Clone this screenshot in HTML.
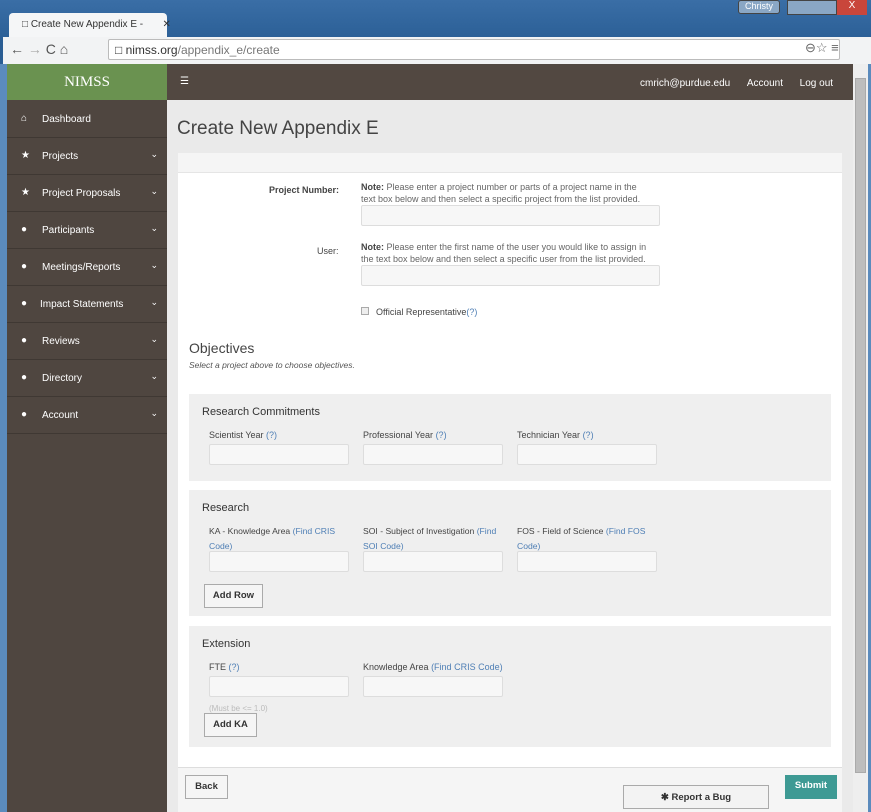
<!DOCTYPE html>
<html><head><style>
*{box-sizing:border-box;margin:0;padding:0}
body{width:871px;height:812px;overflow:hidden;position:relative;font-family:"Liberation Sans",sans-serif;background:#2a5d93}
.a{position:absolute}
.t{font-size:9px;color:#444}
.in{position:absolute;background:#f7f7f7;border:1px solid #ddd;border-radius:2px;height:21px}
.lnk{color:#4f7fb5}
.btn{position:absolute;background:#f5f5f5;border:1px solid #aaa;font-size:9.5px;font-weight:bold;color:#333;text-align:center}
.nav{position:absolute;left:7px;width:160px;height:37px;border-bottom:1px solid #3f3833;color:#fff;font-size:10px}
.nav span{position:absolute;left:35px;top:13px}
.nav i{position:absolute;left:14px;top:12px;font-style:normal;font-size:10px}
.nav b{position:absolute;right:9px;top:11px;font-weight:normal;font-size:9px}
.sec{position:absolute;left:189px;width:642px;background:#efefef}
.h{position:absolute;left:13px;font-size:11px;color:#333}
</style></head><body>
<div class="a" style="left:0;top:0;width:871px;height:40px;background:linear-gradient(#3a6ea6,#2b5f96)"></div>
<div class="a" style="left:9px;top:13px;width:158px;height:25px;background:#f5f6f7;border-radius:4px 4px 0 0"></div>
<div class="a" style="left:22px;top:19px;font-size:10px;color:#333">&#9633; Create New Appendix E - &nbsp;&nbsp;&nbsp;&nbsp;&nbsp;&nbsp;✕</div>
<div class="a" style="left:738px;top:0;width:42px;height:14px;background:#8aa7c5;border:1px solid #444;border-radius:3px;font-size:9px;color:#fff;text-align:center">Christy</div>
<div class="a" style="left:787px;top:0;width:50px;height:15px;background:#8aa7c5;border:1px solid #444"></div>
<div class="a" style="left:837px;top:0;width:30px;height:15px;background:#c9463b;color:#fff;font-size:10px;text-align:center">X</div>
<div class="a" style="left:3px;top:37px;width:868px;height:27px;background:#f2f3f4"></div>
<div class="a" style="left:10px;top:41px;font-size:14px;color:#555">← <span style="color:#aaa">→</span> C ⌂</div>
<div class="a" style="left:108px;top:39px;width:732px;height:21px;background:#fff;border:1px solid #bbb;border-radius:2px;font-size:12px;color:#333;padding:3px 6px">&#9633; nimss.org<span style="color:#777">/appendix_e/create</span></div>
<div class="a" style="left:805px;top:40px;font-size:13px;color:#666">⊖☆ ≡</div>
<div class="a" style="left:0;top:64px;width:7px;height:748px;background:#5b8bbd"></div>
<div class="a" style="left:7px;top:64px;width:160px;height:36px;background:#6a9250;color:#fff;font-family:'Liberation Serif',serif;font-size:15px;text-align:center;padding-top:10px">NIMSS</div>
<div class="a" style="left:167px;top:64px;width:686px;height:36px;background:#524841"></div>
<div class="a" style="left:180px;top:76px;color:#fff;font-size:10px">☰</div>
<div class="a" style="left:640px;top:78px;color:#fff;font-size:10px">cmrich@purdue.edu &nbsp;&nbsp;&nbsp;&nbsp;&nbsp;Account &nbsp;&nbsp;&nbsp;&nbsp;&nbsp;Log out</div>
<div class="a" style="left:7px;top:100px;width:160px;height:712px;background:#4f4640"></div>
<div class="nav" style="top:101px"><i>⌂</i><span style="top:13px">Dashboard</span></div>
<div class="nav" style="top:138px"><i>★</i><span>Projects</span><b>⌄</b></div>
<div class="nav" style="top:175px"><i>★</i><span>Project Proposals</span><b>⌄</b></div>
<div class="nav" style="top:212px"><i>●</i><span>Participants</span><b>⌄</b></div>
<div class="nav" style="top:249px"><i>●</i><span>Meetings/Reports</span><b>⌄</b></div>
<div class="nav" style="top:286px"><i>●</i><span style="left:33px">Impact Statements</span><b>⌄</b></div>
<div class="nav" style="top:323px"><i>●</i><span>Reviews</span><b>⌄</b></div>
<div class="nav" style="top:360px"><i>●</i><span>Directory</span><b>⌄</b></div>
<div class="nav" style="top:397px"><i>●</i><span>Account</span><b>⌄</b></div>
<div class="a" style="left:167px;top:100px;width:686px;height:712px;background:#eaeaea"></div>
<div class="a" style="left:853px;top:64px;width:15px;height:748px;background:#eee"></div>
<div class="a" style="left:855px;top:78px;width:11px;height:695px;background:#bdbdbd;border:1px solid #aaa"></div>
<div class="a" style="left:868px;top:64px;width:3px;height:748px;background:#5b8bbd"></div>
<div class="a" style="left:177px;top:118px;font-size:19px;color:#444">Create New Appendix E</div>
<div class="a" style="left:178px;top:153px;width:664px;height:617px;background:#fff"></div>
<div class="a" style="left:178px;top:153px;width:664px;height:20px;background:#f5f5f5;border-bottom:1px solid #e5e5e5"></div>
<div class="a t" style="left:269px;top:185px;font-weight:bold;font-size:9px">Project Number:</div>
<div class="a t" style="left:361px;top:181px;line-height:12px;font-size:9px;color:#666"><b style="color:#444">Note:</b> Please enter a project number or parts of a project name in the<br>text box below and then select a specific project from the list provided.</div>
<div class="in" style="left:361px;top:205px;width:299px"></div>
<div class="a t" style="left:317px;top:246px;font-size:9px">User:</div>
<div class="a t" style="left:361px;top:241px;line-height:12px;font-size:9px;color:#666"><b style="color:#444">Note:</b> Please enter the first name of the user you would like to assign in<br>the text box below and then select a specific user from the list provided.</div>
<div class="in" style="left:361px;top:265px;width:299px"></div>
<div class="a" style="left:361px;top:307px;width:8px;height:8px;border:1px solid #aaa;background:#eee"></div>
<div class="a t" style="left:376px;top:307px;font-size:9px">Official Representative<span class="lnk">(?)</span></div>
<div class="a" style="left:189px;top:340px;font-size:14px;color:#444">Objectives</div>
<div class="a" style="left:189px;top:360px;font-size:8.5px;color:#555;font-style:italic">Select a project above to choose objectives.</div>
<div class="sec" style="top:394px;height:87px">
<div class="h" style="top:12px">Research Commitments</div>
<div class="a t" style="left:20px;top:36px">Scientist Year <span class="lnk">(?)</span></div>
<div class="a t" style="left:174px;top:36px">Professional Year <span class="lnk">(?)</span></div>
<div class="a t" style="left:328px;top:36px">Technician Year <span class="lnk">(?)</span></div>
<div class="in" style="left:20px;top:50px;width:140px"></div>
<div class="in" style="left:174px;top:50px;width:140px"></div>
<div class="in" style="left:328px;top:50px;width:140px"></div>
</div>
<div class="sec" style="top:490px;height:126px">
<div class="h" style="top:12px">Research</div>
<div class="a t" style="left:20px;top:34px;line-height:15px;width:140px;font-size:8.6px">KA - Knowledge Area <span class="lnk">(Find CRIS Code)</span></div>
<div class="a t" style="left:174px;top:34px;line-height:15px;width:140px;font-size:8.6px">SOI - Subject of Investigation <span class="lnk">(Find SOI Code)</span></div>
<div class="a t" style="left:328px;top:34px;line-height:15px;width:140px;font-size:8.6px">FOS - Field of Science <span class="lnk">(Find FOS Code)</span></div>
<div class="in" style="left:20px;top:61px;width:140px"></div>
<div class="in" style="left:174px;top:61px;width:140px"></div>
<div class="in" style="left:328px;top:61px;width:140px"></div>
<div class="btn" style="left:15px;top:94px;width:59px;height:24px;line-height:22px">Add Row</div>
</div>
<div class="sec" style="top:626px;height:121px">
<div class="h" style="top:12px">Extension</div>
<div class="a t" style="left:20px;top:36px">FTE <span class="lnk">(?)</span></div>
<div class="a t" style="left:174px;top:36px">Knowledge Area <span class="lnk">(Find CRIS Code)</span></div>
<div class="in" style="left:20px;top:50px;width:140px"></div>
<div class="in" style="left:174px;top:50px;width:140px"></div>
<div class="a" style="left:20px;top:78px;font-size:8px;color:#bbb">(Must be &lt;= 1.0)</div>
<div class="btn" style="left:15px;top:87px;width:53px;height:24px;line-height:22px">Add KA</div>
</div>
<div class="a" style="left:178px;top:767px;width:664px;height:45px;background:#f5f5f5;border-top:1px solid #ddd"></div>
<div class="btn" style="left:185px;top:775px;width:43px;height:24px;line-height:22px">Back</div>
<div class="a" style="left:785px;top:775px;width:52px;height:24px;background:#3e9a94;color:#fff;font-size:9.5px;font-weight:bold;text-align:center;line-height:22px">Submit</div>
<div class="btn" style="left:623px;top:785px;width:146px;height:24px;line-height:24px;background:#f3f3f3">✱ Report a Bug</div>
</body></html>
